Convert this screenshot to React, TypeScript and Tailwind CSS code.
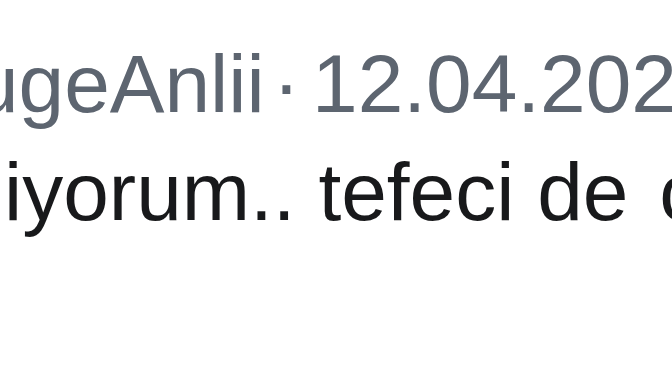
export default function App() {
  return (
    <div className="w-[672px] h-[378px] overflow-hidden bg-white pt-[30px] font-['Liberation_Sans',Arial,sans-serif] text-[82px] leading-[108px] whitespace-nowrap">
      {/* header line: handle + date */}
      <div className="ml-[-27px] text-[#5d6570]">
        <span>ugeAnlii</span>
        <span className="ml-[8px] mr-[12px]">·</span>
        <span>12.04.2023</span>
      </div>
      {/* tweet body */}
      <div className="ml-[4px] text-[#18191b]">
        iyorum.. tefeci de <span className="ml-[8px]">cıktı</span>
      </div>
    </div>
  );
}
